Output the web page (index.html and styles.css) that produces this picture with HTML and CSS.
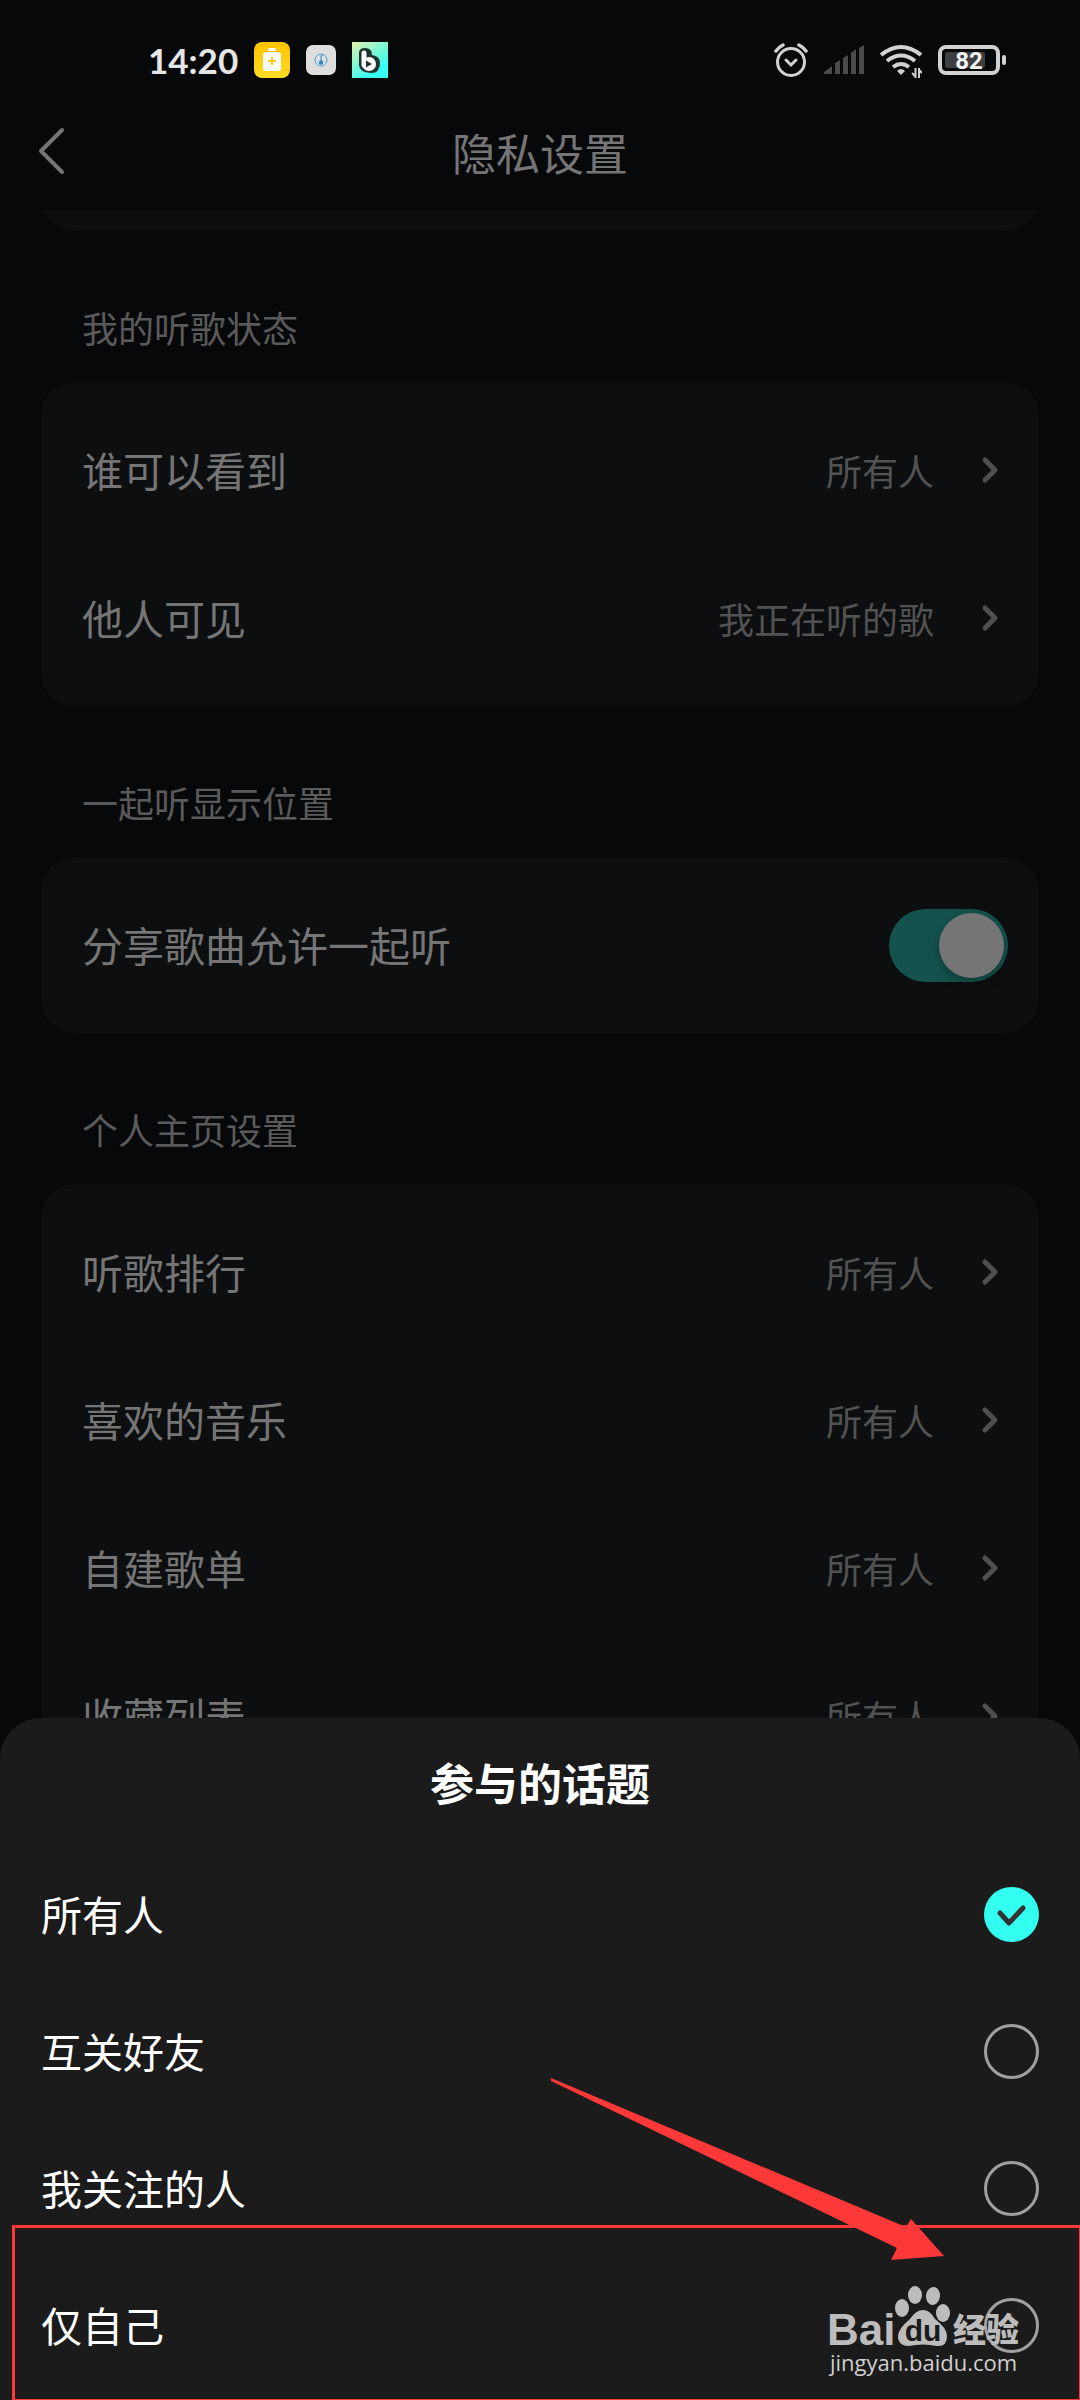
FILE: index.html
```html
<!DOCTYPE html>
<html lang="zh-CN">
  <head>
    <meta charset="UTF-8" />
    <meta name="viewport" content="width=device-width, initial-scale=1" />
    <title>隐私设置</title>
    <link rel="stylesheet" href="styles.css">
  </head>
  <body>
    <header>
      <div class="status">
        <div class="status-left">
          <span class="time">14:20</span>
          <svg class="app-icon" width="36" height="36" viewBox="0 0 36 36">
            <defs>
              <linearGradient id="yellow" x1="0" y1="0" x2="0" y2="1">
                <stop offset="0" stop-color="#ffc400" />
                <stop offset="1" stop-color="#ffda25" />
              </linearGradient>
            </defs>
            <rect width="36" height="36" rx="8" fill="url(#yellow)" />
            <rect x="14" y="6" width="8" height="3" rx="1" fill="#fff" />
            <rect x="9" y="10" width="18" height="19" rx="3" fill="#fff" />
            <path d="M18 15v8M14 19h8" stroke="#ffcb0a" stroke-width="2" />
          </svg>
          <svg class="app-icon" width="30" height="30" viewBox="0 0 30 30">
            <rect width="30" height="30" rx="7" fill="#dedede" />
            <circle cx="15" cy="15" r="6" fill="none" stroke="#4c9fcb" />
            <path d="M15 18v-7l2-1" fill="none" stroke="#2b8bc0" />
            <circle cx="15" cy="17.500" r="2.200" fill="#2b8bc0" />
          </svg>
          <svg class="app-icon" width="36" height="36" viewBox="0 0 36 36">
            <defs>
              <linearGradient id="mint" x1="0" y1="0" x2="0.700" y2="1">
                <stop offset="0" stop-color="#e3f2aa" />
                <stop offset="0.500" stop-color="#7df7d6" />
                <stop offset="0.850" stop-color="#38fff4" />
              </linearGradient>
            </defs>
            <rect width="36" height="36" fill="url(#mint)" />
            <path d="M7 11q0-5 6-5 7 0 7 7 8 1 8 8 0 10-9 10-12-1-12-8z" fill="#20342f" />
            <path d="M12 11v12" stroke="#fff" stroke-width="5" stroke-linecap="round" />
            <circle cx="17" cy="22" r="7" fill="#fff" />
            <path d="M14 18.500v7l6-3.500z" fill="#20342f" />
          </svg>
        </div>
        <div class="status-right">
          <svg width="36" height="36" viewBox="-2 0 36 36" fill="none" stroke="#d2d2d2" stroke-linecap="round">
            <circle cx="17" cy="20" r="13.500" stroke-width="3" />
            <path d="M12 18l5 5 5-5" stroke-width="3" />
            <path d="M2 9q3-4 7-6M32 9q-3-4-7-6" stroke-width="3.500" />
          </svg>
          <svg width="40" height="36" viewBox="0 0 40 36" fill="#4b4b4b">
            <path d="M0 30l8-6v8H0zM11 21l5-3v14h-5zM19 16l5-3v19h-5zM27 11l5-4v25h-5zM35 6l5-3v29h-5z" />
          </svg>
          <svg width="42" height="36" viewBox="0 0 42 36" fill="none" stroke="#d2d2d2" stroke-width="4">
            <path d="M1 13Q21-3 41 13M7 19q14-11 28 0M13 25q8-6 16 0" />
            <path d="M17 29q4-4 8 0l-4 4z" fill="#d2d2d2" stroke="none" />
            <path d="M35.500 26v10M39 26v10M32 31l3 3M42 31l-3-3" stroke-width="2" />
          </svg>
          <svg width="68" height="36" viewBox="0 0 68 36">
            <rect x="2" y="5" width="58" height="26" rx="6" fill="none" stroke="#d2d2d2" stroke-width="4" />
            <rect x="7" y="10" width="40" height="16" rx="2" fill="#3d3e3f" />
            <rect x="64" y="13" width="4" height="10" rx="2" fill="#d2d2d2" />
            <text class="battery-level" x="31" y="27" text-anchor="middle">82</text>
          </svg>
        </div>
      </div>
      <div class="nav">
        <button class="back" aria-label="返回">
          <svg width="30" height="54" viewBox="0 0 30 54">
            <path d="M26 3L5 24l21 21" />
          </svg>
        </button>
        <h1>隐私设置</h1>
      </div>
    </header>

    <main>
      <div class="card card-previous"></div>

      <h2>我的听歌状态</h2>
      <div class="card">
        <button class="row">
          <span class="name">谁可以看到</span>
          <span class="value">所有人</span>
          <svg class="chevron" viewBox="0 0 48 48"><path d="M25 14l10 10-10 10" /></svg>
        </button>
        <button class="row">
          <span class="name">他人可见</span>
          <span class="value">我正在听的歌</span>
          <svg class="chevron" viewBox="0 0 48 48"><path d="M25 14l10 10-10 10" /></svg>
        </button>
      </div>

      <h2>一起听显示位置</h2>
      <div class="card">
        <label class="row">
          <span class="name">分享歌曲允许一起听</span>
          <input class="switch" type="checkbox" checked />
        </label>
      </div>

      <h2>个人主页设置</h2>
      <div class="card">
        <button class="row">
          <span class="name">听歌排行</span>
          <span class="value">所有人</span>
          <svg class="chevron" viewBox="0 0 48 48"><path d="M25 14l10 10-10 10" /></svg>
        </button>
        <button class="row">
          <span class="name">喜欢的音乐</span>
          <span class="value">所有人</span>
          <svg class="chevron" viewBox="0 0 48 48"><path d="M25 14l10 10-10 10" /></svg>
        </button>
        <button class="row">
          <span class="name">自建歌单</span>
          <span class="value">所有人</span>
          <svg class="chevron" viewBox="0 0 48 48"><path d="M25 14l10 10-10 10" /></svg>
        </button>
        <button class="row">
          <span class="name">收藏列表</span>
          <span class="value">所有人</span>
          <svg class="chevron" viewBox="0 0 48 48"><path d="M25 14l10 10-10 10" /></svg>
        </button>
      </div>
    </main>

    <section class="sheet">
      <h3>参与的话题</h3>
      <label class="option"><span>所有人</span><input type="radio" name="topic" checked /></label>
      <label class="option"><span>互关好友</span><input type="radio" name="topic" /></label>
      <label class="option"><span>我关注的人</span><input type="radio" name="topic" /></label>
      <label class="option"><span>仅自己</span><input type="radio" name="topic" /></label>

      <!-- annotations over the last option -->
      <div class="highlight"></div>
      <svg class="arrow" width="394" height="184" viewBox="0 0 394 184">
        <path d="M0 2L355 151l5-8 33 37-53 4 6-12L0 5z" />
      </svg>
      <svg class="watermark" width="200" height="100" viewBox="0 0 200 100">
        <text class="brand" x="0" y="61">Bai</text>
        <ellipse cx="75" cy="24" rx="7" ry="9" />
        <ellipse cx="88" cy="11" rx="7" ry="9" />
        <ellipse cx="106" cy="12" rx="7" ry="9" transform="rotate(8 106 12)" />
        <ellipse cx="116" cy="29" rx="7" ry="9" />
        <path d="M96 26q7 0 12 9 12 9 12 17 0 11-10 10-14-3-28 0-11 0-11-10 0-7 12-17 6-9 13-9z" />
        <text class="du" x="96" y="57" text-anchor="middle">du</text>
        <text class="brand-cn" x="126" y="58">经验</text>
        <text class="site" x="3" y="87">jingyan.baidu.com</text>
      </svg>
    </section>
  </body>
</html>
```

FILE: styles.css
```css
* {
  box-sizing: border-box;
}

html,
body {
  background-color: #07080a;
  color: #757575;
  font-family: "Noto Sans CJK SC", sans-serif;
  height: 100%;
  margin: 0;
  overflow: hidden;
}

body {
  display: flex;
  flex-direction: column;
  position: relative;
}

h1,
h2,
h3 {
  margin: 0;
}

button {
  background: none;
  border: none;
  color: inherit;
  cursor: pointer;
  font-family: inherit;
  padding: 0;
}

svg {
  display: block;
  flex-shrink: 0;
}

/* status bar and title */

.status {
  align-items: center;
  display: flex;
  height: 96px;
  justify-content: space-between;
  padding: 24px 74px 0 148px;
}

.status-left,
.status-right {
  align-items: center;
  display: flex;
  gap: 16px;
}

.time {
  color: #e6e6e6;
  font-family: Lato, sans-serif;
  font-size: 35px;
  font-weight: bold;
  line-height: 36px;
}

.battery-level {
  fill: #f2f2f2;
  font-family: Roboto, sans-serif;
  font-size: 24px;
  font-weight: bold;
}

.nav {
  align-items: center;
  display: grid;
  grid-template-columns: 80px 1fr 80px;
  height: 115px;
}

.back {
  justify-self: end;
  padding-right: 14px;
}

.back path,
.chevron path {
  fill: none;
  stroke: #757575;
  stroke-linecap: round;
  stroke-linejoin: round;
  stroke-width: 4;
}

h1 {
  font-size: 44px;
  font-weight: 400;
  line-height: 64px;
  padding-bottom: 4px;
  text-align: center;
}

/* settings list */

main {
  flex: 1;
  overflow: hidden;
  padding: 0 41px;
}

h2 {
  color: #5a5a5a;
  font-size: 36px;
  font-weight: 400;
  line-height: 54px;
  padding: 69px 41px 28px;
}

.card {
  background-color: #0c0e0f;
  border-radius: 34px;
  padding: 14px 31px 14px 41px;
}

/* scrolled almost out of view under the title */
.card-previous {
  height: 80px;
  margin-top: -60px;
}

.row {
  align-items: center;
  display: flex;
  height: 148px;
  text-align: left;
  width: 100%;
}

.name {
  flex: 1;
  font-size: 41px;
  padding-bottom: 3px;
}

.value {
  color: #525252;
  font-size: 36px;
  margin-right: 26px;
}

.chevron {
  height: 48px;
  width: 48px;
}

.chevron path {
  stroke: #4f4f4f;
  stroke-width: 5;
}

.switch {
  appearance: none;
  background-color: #14534d;
  border-radius: 37px;
  display: flex;
  height: 73px;
  justify-content: flex-end;
  margin: 0;
  padding: 4px;
  width: 119px;
}

.switch::before {
  background-color: #757575;
  border-radius: 50%;
  box-shadow: 0 4px 12px rgba(0, 0, 0, 0.3);
  content: "";
  height: 65px;
  width: 65px;
}

.switch:not(:checked) {
  background-color: #333;
  justify-content: flex-start;
}

/* bottom sheet */

.sheet {
  background-color: #1b1b1b;
  border-radius: 41px 41px 0 0;
  bottom: 0;
  color: #fff;
  left: 0;
  padding-bottom: 6px;
  position: absolute;
  right: 0;
}

h3 {
  font-size: 44px;
  font-weight: 700;
  line-height: 128px;
  text-align: center;
}

.option {
  align-items: center;
  display: flex;
  font-size: 41px;
  height: 137px;
  justify-content: space-between;
  padding: 0 41px;
}

.option span {
  padding-bottom: 3px;
}

.option input {
  appearance: none;
  border: 3px solid #a0a0a0;
  border-radius: 50%;
  height: 55px;
  margin: 0;
  width: 55px;
}

.option input:checked {
  background: #33fff0 url("data:image/svg+xml,%3Csvg xmlns='http://www.w3.org/2000/svg' viewBox='0 0 55 55'%3E%3Cpath d='M16 26l9 10 14-15' fill='none' stroke='%23333' stroke-width='5' stroke-linecap='round' stroke-linejoin='round'/%3E%3C/svg%3E") center / 55px 55px no-repeat;
  border: none;
}

.highlight {
  border: 3px solid #fc3838;
  border-bottom-width: 1px;
  border-right-width: 1px;
  bottom: 0;
  height: 175px;
  left: 12px;
  pointer-events: none;
  position: absolute;
  right: 0;
}

.arrow {
  bottom: 140px;
  fill: #fc3838;
  pointer-events: none;
  position: absolute;
  right: 135px;
}

.watermark {
  bottom: 16px;
  fill: #bcbcbc;
  overflow: visible;
  pointer-events: none;
  position: absolute;
  right: 53px;
}

.brand {
  font-family: "Liberation Sans", sans-serif;
  font-size: 44px;
  font-weight: bold;
}

.du {
  fill: #1b1b1b;
  font-family: "Liberation Sans", sans-serif;
  font-size: 30px;
  font-weight: bold;
}

.brand-cn {
  font-size: 33px;
  font-weight: 900;
}

.site {
  fill: #cfcfcf;
  font-family: "Open Sans", sans-serif;
  font-size: 22px;
  font-weight: 500;
}
```
